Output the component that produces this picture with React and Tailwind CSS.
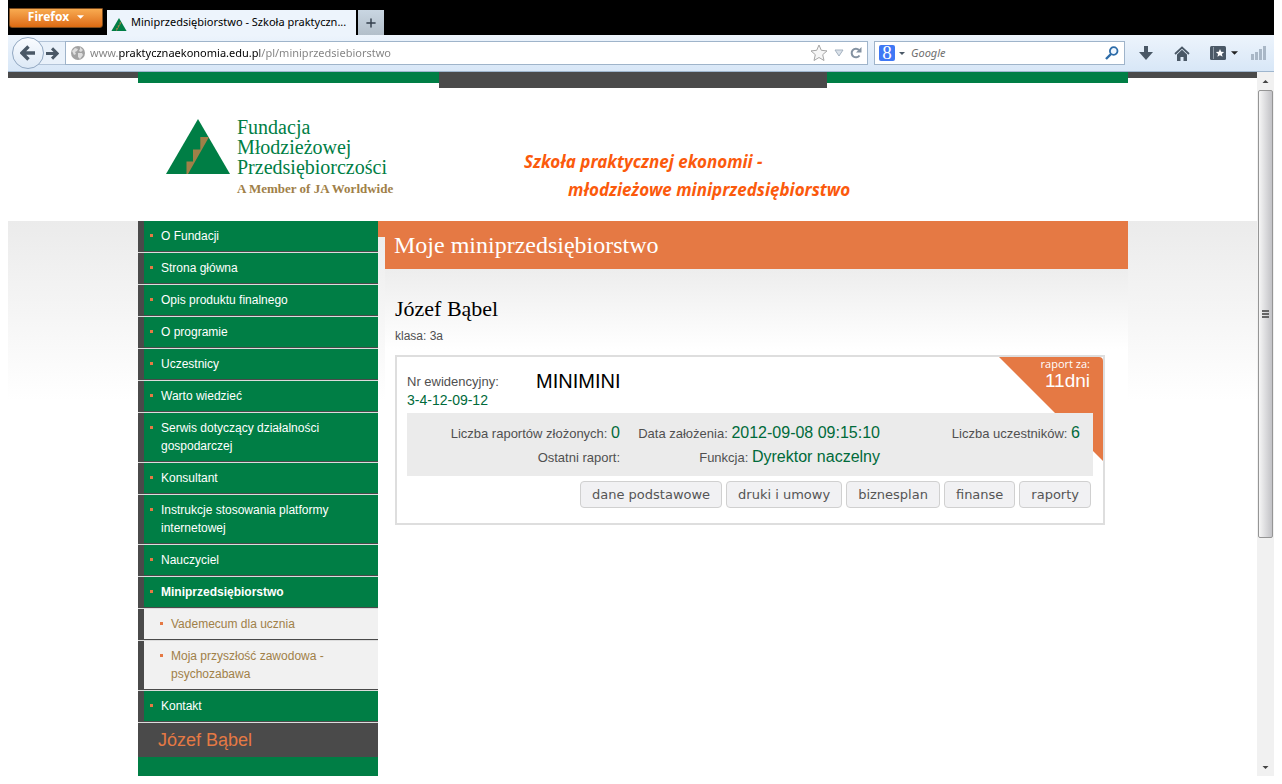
import { Plus } from "lucide-react";

const NAV = [
  { label: "O Fundacji" },
  { label: "Strona główna" },
  { label: "Opis produktu finalnego" },
  { label: "O programie" },
  { label: "Uczestnicy" },
  { label: "Warto wiedzieć" },
  { label: "Serwis dotyczący działalności gospodarczej" },
  { label: "Konsultant" },
  { label: "Instrukcje stosowania platformy internetowej" },
  { label: "Nauczyciel" },
  { label: "Miniprzedsiębiorstwo", active: true },
  { label: "Vademecum dla ucznia", sub: true },
  { label: "Moja przyszłość zawodowa - psychozabawa", sub: true },
  { label: "Kontakt" },
];

const STATS = [
  { label: "Liczba raportów złożonych:", value: "0" },
  { label: "Data założenia:", value: "2012-09-08 09:15:10" },
  { label: "Liczba uczestników:", value: "6" },
  { label: "Ostatni raport:", value: "" },
  { label: "Funkcja:", value: "Dyrektor naczelny" },
];

const ACTIONS = ["dane podstawowe", "druki i umowy", "biznesplan", "finanse", "raporty"];

function Caret({ className }) {
  return (
    <svg viewBox="0 0 8 4" className={className} aria-hidden="true">
      <path d="M0 0h8L4 4z" fill="currentColor" />
    </svg>
  );
}

function StairTriangle({ className }) {
  return (
    <svg viewBox="0 0 64 55" className={className} aria-hidden="true">
      <path d="M32 0L64 55H0z" fill="#007e45" />
      <path d="M20.500 55V42.500H27V30.500h7.300V18H43L22 55z" fill="#a08048" />
    </svg>
  );
}

function TabStrip() {
  return (
    <div className="flex h-[35px] bg-black">
      <button className="mt-2 ml-px flex h-5 w-[94px] items-center justify-center gap-2 rounded-b-[3px] border border-[#7c4a1c] bg-linear-to-b from-[#f8ab50] to-[#dc6a10] pb-[2px] text-[12px] font-bold text-white">
        Firefox
        <Caret className="h-1 w-[7px]" />
      </button>
      <div className="mt-[10px] ml-1 flex min-w-0 basis-[249px] items-center gap-1 bg-[#edf4fc] px-1 text-[11px] text-black">
        <StairTriangle className="mt-1 h-[13px] w-4 shrink-0" />
        <span className="whitespace-nowrap">Miniprzedsiębiorstwo - Szkoła praktyczn...</span>
      </div>
      <button aria-label="Nowa karta" className="mt-[10px] ml-[2px] flex w-[26px] items-center justify-center bg-linear-to-b from-[#c9d6e2] to-[#b3bfca] text-[#333f4c]">
        <Plus size={14} strokeWidth={2.5} />
      </button>
    </div>
  );
}

function Toolbar() {
  return (
    <div className="flex h-[37px] items-center border-b border-[#9fb6ce] bg-linear-to-b from-[#edf4fc] to-[#d8e7f7] pr-2 pl-1 text-[#4a5866]">
      <button aria-label="Wstecz" className="relative z-10 flex size-8 shrink-0 items-center justify-center rounded-full border border-[#92a8c2] bg-linear-to-b from-[#fafcff] to-[#dde9f6]">
        <svg viewBox="0 0 16 16" className="size-4" aria-hidden="true">
          <path d="M8.500 1.500L2 8l6.500 6.500M2.500 8H15" fill="none" stroke="currentColor" strokeWidth="3.400" />
        </svg>
      </button>
      <button aria-label="Dalej" className="-ml-2 flex h-6 w-[29px] shrink-0 items-center justify-end border-y border-[#b3c4d8] bg-[#e9f1fa] pr-[6px]">
        <svg viewBox="0 0 14 14" className="size-[13px]" aria-hidden="true">
          <path d="M6.500 1.500L12 7l-5.500 5.500M0 7h11.500" fill="none" stroke="currentColor" strokeWidth="3.200" />
        </svg>
      </button>
      <form className="flex h-6 min-w-0 flex-1 items-center border border-[#9fb4ca] bg-white px-[5px]" onSubmit={(e) => e.preventDefault()}>
        <svg viewBox="0 0 14 14" className="size-[14px] shrink-0" aria-hidden="true">
          <circle cx="7" cy="7" r="7" fill="#a2a2a2" />
          <path d="M1 5l3-3 3 1-1 2-2 1 1 2-2 1zM9 1l3 3-2 2-2-1 1-2zM7 7l4 0 1 2-3 4-2-2z" fill="#dedede" />
        </svg>
        {/* only the domain is painted black, the rest of the address stays grey */}
        <input
          aria-label="Adres strony"
          defaultValue="www.praktycznaekonomia.edu.pl/pl/miniprzedsiebiorstwo"
          className="ml-[5px] min-w-0 flex-1 bg-[linear-gradient(90deg,#808080_28px,#000_28px,#000_170px,#808080_170px)] bg-clip-text text-[11px] text-transparent outline-none"
        />
        <button aria-label="Dodaj zakładkę">
          <svg viewBox="0 0 18 18" className="size-[18px]" aria-hidden="true">
            <path d="M9 1l2.300 5.300 5.700.6-4.300 3.800 1.300 5.800L9 13.500 4 16.500l1.300-5.800L1 6.900l5.700-.6z" fill="#f6f6f6" stroke="#a6a6a6" />
          </svg>
        </button>
        <button aria-label="Historia" className="ml-[6px]">
          <svg viewBox="0 0 10 8" className="h-2 w-[10px]" aria-hidden="true">
            <path d="M1 1h8L5 7z" fill="#dbe2ea" stroke="#a5b2c0" />
          </svg>
        </button>
        <button aria-label="Odśwież" className="ml-[6px]">
          <svg viewBox="0 0 12 12" className="size-3" aria-hidden="true">
            <path d="M9.500 8.500A4.300 4.300 0 1 1 9 3" fill="none" stroke="#8492a1" strokeWidth="2" />
            <path d="M11.500 0v5.500H6z" fill="#8492a1" />
          </svg>
        </button>
      </form>
      <form className="ml-[6px] flex h-6 w-[251px] shrink-0 items-center border border-[#9fb4ca] bg-white pr-[5px] pl-1" onSubmit={(e) => e.preventDefault()}>
        <button aria-label="Wyszukiwarka" className="flex items-center gap-1">
          <span className="flex size-4 items-center justify-center rounded-[2px] bg-[#3f78f5] font-['Liberation_Serif',serif] text-[19px] leading-4 text-white">8</span>
          <Caret className="h-[3px] w-[6px]" />
        </button>
        <input aria-label="Szukaj" placeholder="Google" className="ml-[6px] min-w-0 flex-1 text-[11px] italic outline-none placeholder:text-[#6f6f6f]" />
        <button aria-label="Szukaj w Google">
          <svg viewBox="0 0 14 14" className="size-[14px]" aria-hidden="true">
            <circle cx="8.700" cy="5" r="3.800" fill="#eef6ff" stroke="#2d6ca8" strokeWidth="1.800" />
            <path d="M6 8L1 13" stroke="#2d6ca8" strokeWidth="2.400" />
          </svg>
        </button>
      </form>
      <button aria-label="Pobieranie" className="ml-[14px]">
        <svg viewBox="0 0 14 14" className="size-[14px]" aria-hidden="true">
          <path d="M5 0h4v6h5l-7 8-7-8h5z" fill="currentColor" />
        </svg>
      </button>
      <button aria-label="Strona startowa" className="ml-[21px]">
        <svg viewBox="0 0 16 15" className="h-[15px] w-4" aria-hidden="true">
          <path d="M1 8l7-6.500L15 8" fill="none" stroke="currentColor" strokeWidth="1.800" />
          <path d="M3 8.500l5-4.700 5 4.700V15H9.500v-4h-3v4H3z" fill="currentColor" />
        </svg>
      </button>
      <button aria-label="Zakładki" className="ml-5 flex items-center gap-[5px]">
        <svg viewBox="0 0 16 14" className="h-[14px] w-4" aria-hidden="true">
          <rect width="16" height="14" rx="1.500" fill="currentColor" />
          <path d="M3.500 1v12" stroke="#8f9ba7" />
          <path d="M10 3l1.200 2.700 2.900.3-2.200 1.900.7 2.900L10 9.300l-2.600 1.500.7-2.900L5.900 6l2.900-.3z" fill="#fff" />
        </svg>
        <Caret className="h-1 w-[7px] text-[#222]" />
      </button>
      <svg viewBox="0 0 15 14" className="ml-[13px] h-[14px] w-[15px]" aria-hidden="true">
        <path d="M0 8h3v6H0zM4 6h3v8H4zM8 3h3v11H8zM12 0h3v14h-3z" fill="#a9b7c6" />
      </svg>
    </div>
  );
}

function Header() {
  return (
    <header className="h-[149px] border-t-[6px] border-[#4a4a4a] pl-px">
      <div className="mx-auto -mt-[6px] max-w-[990px]">
        <div className="flex h-4 items-start">
          <div className="h-[11px] flex-[301] bg-[#007e45]" />
          <div className="h-4 flex-[388] bg-[#4a4a4a]" />
          <div className="h-[11px] flex-[301] bg-[#007e45]" />
        </div>
        <div className="flex pt-[29px] pl-7">
          <a href="#" className="flex w-[358px] gap-[7px] font-['Liberation_Serif',serif] text-[20px] leading-5 text-[#007e45]">
            <StairTriangle className="mt-[2px] h-[55px] w-16 shrink-0" />
            <span>
              <span className="block">Fundacja</span>
              <span className="block">Młodzieżowej</span>
              <span className="block">Przedsiębiorczości</span>
              <span className="block text-[13px] leading-6 font-bold text-[#a08048]">A Member of JA Worldwide</span>
            </span>
          </a>
          <p className="pt-[31px] font-['Noto_Sans',sans-serif] text-[17px] leading-7 font-bold text-[#fb5a0c] italic">
            <span className="block">Szkoła praktycznej ekonomii -</span>
            <span className="block pl-11">młodzieżowe miniprzedsiębiorstwo</span>
          </p>
        </div>
      </div>
    </header>
  );
}

function NavItem({ label, active, sub }) {
  return (
    <li className="border-b border-[#dcdcdc] bg-[#4a4a4a] pb-px pl-[6px] text-[12px] leading-[18px]">
      <a
        href="#"
        className={
          sub
            ? "flex gap-2 bg-[#f1f1f1] py-[6px] pr-6 pl-4 text-[#a08048]"
            : `flex gap-2 bg-[#007e45] py-[6px] pr-6 pl-[6px] text-white ${active ? "font-bold" : ""}`
        }
      >
        <span className="mt-[7px] size-[3px] shrink-0 bg-[#e57944]" />
        {label}
      </a>
    </li>
  );
}

function Sidebar() {
  return (
    <nav className="w-[240px] shrink-0 bg-[#007e45]">
      <ul>
        {NAV.map((item) => (
          <NavItem key={item.label} {...item} />
        ))}
      </ul>
      <p className="bg-[#4a4a4a] pl-5 text-[18px] leading-[34px] text-[#e57944]">Józef Bąbel</p>
    </nav>
  );
}

function CompanyCard() {
  return (
    <section className="relative mt-[10px] border-2 border-[#dedede] bg-white px-[10px] pb-[15px]">
      <svg viewBox="0 0 104 104" className="absolute top-0 right-0 size-[104px]" aria-hidden="true">
        <path d="M0 0H100a4 4 0 0 1 4 4V104z" fill="#e57944" />
      </svg>
      <div className="relative flex h-14 items-start">
        <p className="w-[129px] pt-4 text-[13px] leading-[18px] text-[#505050]">
          <span className="block">Nr ewidencyjny:</span>
          <span className="block text-[14px] text-[#006a3a]">3-4-12-09-12</span>
        </p>
        <h3 className="flex-1 pt-3 text-[20px] leading-6 text-black">MINIMINI</h3>
        <p className="pr-[3px] text-right text-white">
          <span className="block font-['Open_Sans',sans-serif] text-[11px] leading-[14px]">raport za:</span>
          <span className="block text-[19px] leading-5">11dni</span>
        </p>
      </div>
      <dl className="relative grid grid-cols-[213fr_260fr_200fr] bg-[#ebebeb] pt-2 pr-[13px] pb-[7px] text-right text-[13px] leading-[23px] text-[#505050]">
        {STATS.map((s) => (
          <div key={s.label}>
            <dt className="inline">{s.label}</dt> <dd className="inline text-[16px] text-[#006a3a]">{s.value}</dd>
          </div>
        ))}
      </dl>
      <div className="relative mt-[5px] flex justify-end gap-1 pr-[2px]">
        {ACTIONS.map((name) => (
          <button key={name} className="h-[27px] rounded-[4px] border border-[#d0d0d0] bg-[#f1f1f3] px-[11px] font-['DejaVu_Sans',sans-serif] text-[13px] text-[#555]">
            {name}
          </button>
        ))}
      </div>
    </section>
  );
}

function Content() {
  return (
    <main className="flex min-w-0 flex-1 items-stretch">
      <div className="h-4 w-[7px] shrink-0 bg-[#e57944]" />
      <div className="min-w-0 flex-1 bg-white">
        <h1 className="bg-[#e57944] pl-[9px] font-['Liberation_Serif',serif] text-[24px] leading-[48px] text-white">Moje miniprzedsiębiorstwo</h1>
        <div className="bg-[linear-gradient(#ededed,#fff_80px)] pt-[26px] pr-[23px] pl-[10px]">
          <h2 className="font-['Liberation_Serif',serif] text-[22px] leading-[28px] text-black">Józef Bąbel</h2>
          <p className="mt-1 text-[12px] leading-[18px] text-[#505050]">klasa: 3a</p>
          <CompanyCard />
        </div>
      </div>
    </main>
  );
}

function Scrollbar() {
  return (
    <div className="flex w-[17px] shrink-0 flex-col items-center bg-[#f1f1f1] text-[#444]" aria-hidden="true">
      <div className="flex h-[18px] items-center">
        <Caret className="h-[3px] w-[7px] rotate-180" />
      </div>
      <div className="flex w-[15px] flex-[447] flex-col items-center justify-center gap-px rounded-[2px] border border-[#959595] bg-linear-to-r from-[#f6f6f6] to-[#c2c2c6]">
        <div className="h-[2px] w-[7px] bg-[#666]" />
        <div className="h-[2px] w-[7px] bg-[#666]" />
        <div className="h-[2px] w-[7px] bg-[#666]" />
      </div>
      <div className="flex-[221]" />
      <div className="flex h-[18px] items-center">
        <Caret className="h-[3px] w-[7px]" />
      </div>
    </div>
  );
}

export default function App() {
  return (
    <div className="flex h-screen flex-col bg-white px-2 pb-2">
      <div className="font-['Noto_Sans',sans-serif]">
        <TabStrip />
        <Toolbar />
      </div>
      <div className="flex min-h-0 flex-1 font-['Liberation_Sans',sans-serif]">
        <div className="flex min-w-0 flex-1 flex-col overflow-hidden">
          <Header />
          <div className="flex-1 bg-[linear-gradient(#ebebeb,#fff_180px)] pl-px">
            <div className="mx-auto flex h-full max-w-[990px]">
              <Sidebar />
              <Content />
            </div>
          </div>
        </div>
        <Scrollbar />
      </div>
    </div>
  );
}
